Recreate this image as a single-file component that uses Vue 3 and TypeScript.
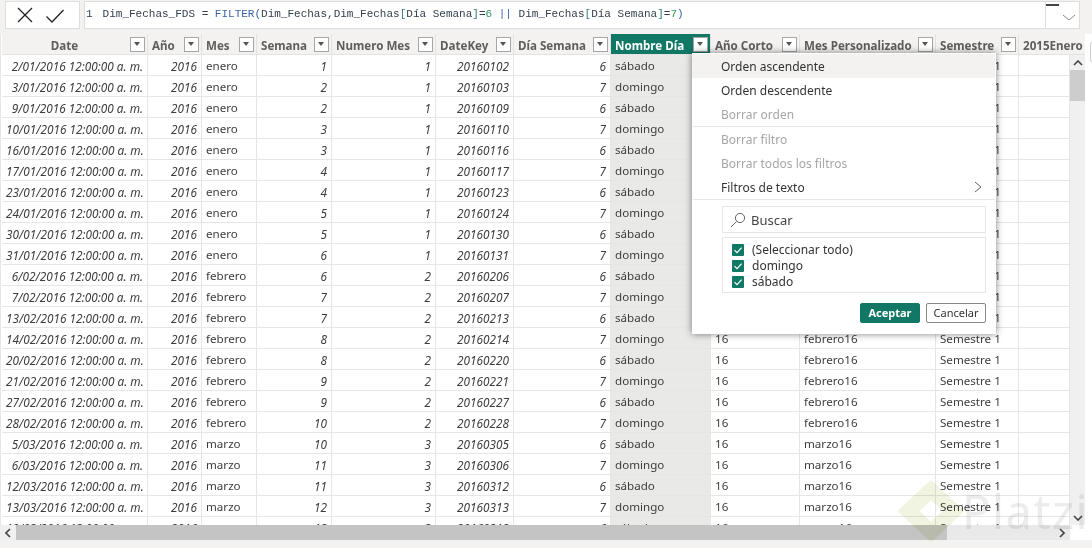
<script setup lang="ts">
interface Row { d: string; mes: string; sem: number; num: number; key: string; dia: number; nombre: string; per: string }
const raw: [string, number][] = [
  ['2/01', 1], ['3/01', 2], ['9/01', 2], ['10/01', 3], ['16/01', 3], ['17/01', 4], ['23/01', 4], ['24/01', 5],
  ['30/01', 5], ['31/01', 6], ['6/02', 6], ['7/02', 7], ['13/02', 7], ['14/02', 8], ['20/02', 8], ['21/02', 9],
  ['27/02', 9], ['28/02', 10], ['5/03', 10], ['6/03', 11], ['12/03', 11], ['13/03', 12], ['19/03', 12],
]
const meses = ['enero', 'febrero', 'marzo']
const rows: Row[] = raw.map(([d, sem], i) => {
  const [day, mon] = d.split('/')
  const m = Number(mon)
  return {
    d: `${d}/2016 12:00:00 a. m.`,
    mes: meses[m - 1],
    sem,
    num: m,
    key: `2016${mon}${day.padStart(2, '0')}`,
    dia: i % 2 === 0 ? 6 : 7,
    nombre: i % 2 === 0 ? 'sábado' : 'domingo',
    per: `${meses[m - 1]}16`,
  }
})
const headers = ['Date', 'Año', 'Mes', 'Semana', 'Numero Mes', 'DateKey', 'Día Semana', 'Nombre Día', 'Año Corto', 'Mes Personalizado', 'Semestre']
const checks = ['(Seleccionar todo)', 'domingo', 'sábado']
</script>

<template>
  <div class="page">
    <div class="bar">
      <div class="btns">
        <svg width="18" height="18" viewBox="0 0 18 18"><path d="M2 2 16 16M16 2 2 16" stroke="#222" stroke-width="1.3" fill="none" /></svg>
        <svg width="20" height="18" viewBox="0 0 20 18"><path d="M1.5 10.5 7 16 18.5 4" stroke="#222" stroke-width="1.3" fill="none" /></svg>
      </div>
      <div class="formula">
        <code><span class="ln">1</span>Dim_Fechas_FDS = <b class="fn">FILTER(</b>Dim_Fechas,Dim_Fechas<b class="br">[</b>Día Semana<b class="br">]</b>=<b class="nm">6</b> <b class="fn">||</b> Dim_Fechas<b class="br">[</b>Día Semana<b class="br">]</b>=<b class="nm">7</b><b class="fn">)</b></code>
        <div class="expand">
          <i></i>
          <svg width="14" height="7" viewBox="0 0 14 7"><path d="M1 1 7 6 13 1" stroke="#8a8a8a" fill="none" /></svg>
        </div>
      </div>
    </div>

    <div class="main">
      <div class="row head">
        <div v-for="(h, i) in headers" :key="h" class="hc" :class="{ sel: i === 7 }">
          <span class="ht">{{ h }}</span>
          <span class="fb"></span>
        </div>
        <div class="hc last"><span class="ht">2015Enero</span></div>
      </div>
      <div class="body">
        <div class="rows">
          <div v-for="r in rows" :key="r.key" class="row">
            <div class="c r it">{{ r.d }}</div>
            <div class="c r it">2016</div>
            <div class="c">{{ r.mes }}</div>
            <div class="c r it">{{ r.sem }}</div>
            <div class="c r it">{{ r.num }}</div>
            <div class="c r it">{{ r.key }}</div>
            <div class="c r it">{{ r.dia }}</div>
            <div class="c shade">{{ r.nombre }}</div>
            <div class="c">16</div>
            <div class="c">{{ r.per }}</div>
            <div class="c">Semestre 1</div>
            <div class="c"></div>
          </div>
        </div>
        <div class="vbar">
          <svg class="arr" width="10" height="6" viewBox="0 0 10 6"><path d="M1 5 5 1 9 5" stroke="#444" stroke-width="1.6" fill="none" /></svg>
          <div class="vthumb"></div>
          <div class="vspace"></div>
          <svg class="arr" width="10" height="6" viewBox="0 0 10 6"><path d="M1 1 5 5 9 1" stroke="#444" stroke-width="1.6" fill="none" /></svg>
        </div>
      </div>
    </div>

    <div class="hbar">
      <div class="harr"><svg width="6" height="10" viewBox="0 0 6 10"><path d="M5 1 1 5 5 9" stroke="#444" stroke-width="1.6" fill="none" /></svg></div>
      <div class="hthumb"></div>
      <div class="htrack"><svg width="6" height="10" viewBox="0 0 6 10"><path d="M1 1 5 5 1 9" stroke="#444" stroke-width="1.6" fill="none" /></svg></div>
      <div class="corner"></div>
    </div>
    <div class="foot"></div>

    <div class="edge"></div>

    <div class="mark">
      <svg width="68" height="62" viewBox="0 0 68 62"><path d="M34 3 64 31 34 59 4 31Z M34 17 19 31 34 45 49 31Z" fill="#f0f4e0" stroke="#f0f4e0" stroke-width="5" stroke-linejoin="round" fill-rule="evenodd" /></svg>
      <span>Platzi</span>
    </div>

    <div class="menu">
      <div class="mi hover">Orden ascendente</div>
      <div class="mi">Orden descendente</div>
      <div class="mi off">Borrar orden</div>
      <div class="sep"></div>
      <div class="mi off">Borrar filtro</div>
      <div class="mi off">Borrar todos los filtros</div>
      <div class="mi sub">
        <span>Filtros de texto</span>
        <svg width="8" height="12" viewBox="0 0 8 12"><path d="M1 1 7 6 1 11" stroke="#666" fill="none" /></svg>
      </div>
      <div class="sep"></div>
      <div class="search">
        <svg width="16" height="16" viewBox="0 0 16 16"><circle cx="10" cy="6" r="4.6" stroke="#666" fill="none" /><path d="M6.6 9.4 1 15" stroke="#666" fill="none" /></svg>
        <span>Buscar</span>
      </div>
      <div class="list">
        <div v-for="c in checks" :key="c" class="chk">
          <span class="box"><svg width="12" height="12" viewBox="0 0 12 12"><path d="M2.5 6.2 5 8.7 9.6 3.6" stroke="#fff" stroke-width="1.2" fill="none" /></svg></span>
          <span>{{ c }}</span>
        </div>
      </div>
      <div class="actions">
        <button class="ok">Aceptar</button>
        <button class="cancel">Cancelar</button>
      </div>
    </div>
  </div>
</template>

<style>
html, body { margin: 0; padding: 0; background: #fff; }
</style>

<style scoped>
.page {
  position: relative;
  width: 1092px;
  height: 548px;
  overflow: hidden;
  background: #fff;
  display: flex;
  flex-direction: column;
  font-family: "Noto Sans", sans-serif;
  font-size: 11.6px;
  color: #3d3d3d;
}
.bar {
  height: 34px;
  box-sizing: border-box;
  background: #f3f2f1;
  display: flex;
  gap: 4px;
  padding: 1px 12px 5px 5px;
  flex: none;
}
.btns {
  width: 75px;
  box-sizing: border-box;
  background: #fff;
  border: 1px solid #dedede;
  display: flex;
  align-items: center;
  gap: 11px;
  padding-left: 10px;
}
.formula {
  flex: 1;
  background: #fff;
  border: 1px solid #dcdcdc;
  display: flex;
  align-items: center;
  justify-content: space-between;
  padding-left: 1px;
}
code {
  font-family: "Liberation Mono", monospace;
  font-size: 11px;
  white-space: pre;
  color: #34404c;
  margin-top: -3px;
}
code b { font-weight: normal; }
.ln { margin-right: 10px; }
.fn { color: #3b63a8; }
.br { color: #2f7d78; }
.nm { color: #2f9a5a; }
.expand {
  width: 34px;
  height: 100%;
  border-left: 1px solid #dcdcdc;
  position: relative;
  display: flex;
  align-items: center;
  justify-content: center;
  padding: 4px 0 0 12px;
  box-sizing: border-box;
}
.expand i {
  position: absolute;
  left: 0;
  top: 2px;
  width: 13px;
  height: 2px;
  background: #444;
}
.main {
  flex: 1;
  min-height: 0;
  display: flex;
  flex-direction: column;
  padding-left: 1px;
  border-left: 1px solid #e6e6e6;
  margin-right: 7px;
}
.body {
  flex: 1;
  min-height: 0;
  display: flex;
}
.rows {
  width: 1068px;
  overflow: hidden;
  flex: none;
}
.row {
  display: grid;
  grid-template-columns: 146px 54px 55px 75px 104px 78px 97px 100px 89px 136px 83px 51px;
  height: 21px;
  box-sizing: border-box;
}
.head {
  height: 21px;
  flex: none;
  background: #f3f2f1;
  grid-template-columns: 146px 54px 55px 75px 104px 78px 97px 100px 89px 136px 83px 66px;
}
.hc {
  display: flex;
  align-items: center;
  justify-content: space-between;
  gap: 2px;
  padding: 2px 2px 0 4px;
  border-right: 1px solid #e3e3e3;
  border-bottom: 1px solid #e3e3e3;
  font-weight: 700;
  color: #605e5c;
  white-space: nowrap;
  overflow: hidden;
  box-sizing: border-box;
}
.hc:first-child .ht { flex: 1; text-align: center; padding-right: 5px; }
.hc.sel { background: #117865; color: #fff; }
.hc.last { padding: 2px 0 0 4px; border-right: 0; }
.fb {
  flex: none;
  width: 15px;
  height: 15px;
  margin-top: -2px;
  box-sizing: border-box;
  background: #fff;
  border: 1px solid #a6a6a6;
  position: relative;
}
.fb::after {
  content: "";
  position: absolute;
  left: 3px;
  top: 4px;
  border: 3.5px solid transparent;
  border-top: 4px solid #555;
  border-bottom: 0;
}
.c {
  padding: 0 4px;
  border-right: 1px solid #e6e6e6;
  border-bottom: 1px solid #e6e6e6;
  line-height: 22px;
  white-space: nowrap;
  overflow: hidden;
}
.r { text-align: right; }
.it { font-style: italic; font-size: 11.8px; }
.shade { background: #e9e9e8; }
.vbar {
  width: 15px;
  flex: none;
  background: #f0f0f0;
  display: flex;
  flex-direction: column;
  align-items: center;
}
.arr { flex: none; margin: 5px 0 4px; }
.vthumb { width: 100%; height: 31px; background: #cdcdcd; flex: none; }
.vspace { flex: 1; }
.edge {
  position: absolute;
  left: 1090px;
  top: 42px;
  width: 4px;
  height: 18px;
  border: 1px solid #ccc;
  border-radius: 2px;
}
.hbar {
  height: 15px;
  flex: none;
  display: flex;
  background: #e9e9e9;
}
.harr {
  width: 16px;
  flex: none;
  display: flex;
  align-items: center;
  justify-content: center;
  background: #f0f0f0;
}
.hthumb { width: 931px; flex: none; background: #c4c4c4; }
.htrack {
  flex: 1;
  display: flex;
  align-items: center;
  justify-content: flex-end;
  padding-right: 5px;
}
.corner { width: 22px; flex: none; background: #fff; }
.foot { height: 8px; flex: none; background: #f3f2f1; }

.mark {
  position: absolute;
  left: 897px;
  top: 480px;
  display: flex;
  align-items: center;
  pointer-events: none;
  mix-blend-mode: multiply;
}
.mark span {
  font-size: 47px;
  letter-spacing: 1.5px;
  color: #ececec;
  line-height: 60px;
  margin-left: -3px;
}
.menu {
  position: absolute;
  left: 692px;
  top: 53px;
  width: 304px;
  height: 281px;
  box-sizing: border-box;
  background: #fff;
  box-shadow: 0 0 7px rgba(0, 0, 0, .5);
  padding-top: 1px;
  display: flex;
  flex-direction: column;
  color: #333;
  font-size: 12px;
}
.mi {
  height: 24px;
  line-height: 26px;
  padding-left: 29px;
  flex: none;
}
.hover { background: #f3f2f1; margin-right: 1px; }
.off { color: #a6a6a6; }
.sub {
  display: flex;
  align-items: center;
  justify-content: space-between;
  padding-right: 14px;
}
.sub span { padding-top: 2px; }
.sep { height: 1px; background: #e8e8e8; margin: 0 1px; flex: none; }
.search {
  margin: 6px 10px 0 30px;
  height: 27px;
  box-sizing: border-box;
  border: 1px solid #e6e6e6;
  display: flex;
  align-items: center;
  gap: 5px;
  padding-left: 7px;
  font-size: 13px;
  color: #444;
  flex: none;
}
.list {
  margin: 4px 10px 0 30px;
  height: 56px;
  box-sizing: border-box;
  border: 1px solid #e6e6e6;
  padding: 4px 0 0 9px;
  flex: none;
}
.chk {
  height: 16px;
  display: flex;
  align-items: center;
  gap: 8px;
  line-height: 16px;
}
.box {
  width: 12px;
  height: 12px;
  background: #117865;
  border-radius: 1px;
  display: block;
  flex: none;
}
.box svg { display: block; }
.actions {
  display: flex;
  justify-content: flex-end;
  gap: 6px;
  margin: 10px 10px 0 0;
}
button {
  width: 60px;
  height: 20px;
  box-sizing: border-box;
  padding: 0;
  font-family: "Noto Sans", sans-serif;
  font-size: 11px;
  border-radius: 2px;
  line-height: 18px;
}
.ok { background: #117865; border: 1px solid #117865; color: #fff; font-weight: 700; }
.cancel { background: #fff; border: 1px solid #8a8886; color: #333; }
</style>
